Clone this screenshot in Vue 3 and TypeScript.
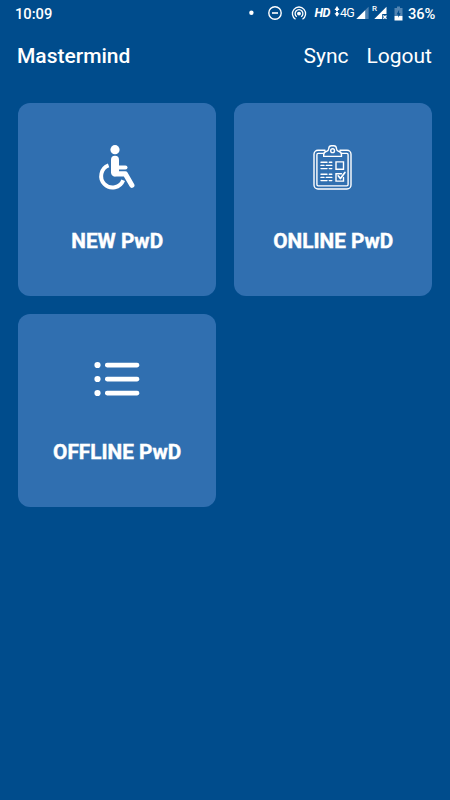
<script setup lang="ts">
interface Tile {
  id: 'new' | 'online' | 'offline'
  label: string
}

const tiles: Tile[] = [
  { id: 'new', label: 'NEW PwD' },
  { id: 'online', label: 'ONLINE PwD' },
  { id: 'offline', label: 'OFFLINE PwD' },
]
</script>

<template>
  <div class="screen">
    <div class="status">
      <span class="clock">10:09</span>
      <div class="indicators">
        <svg class="dot" width="6" height="14" viewBox="0 0 6 14"><circle cx="3.4" cy="6.7" r="2.2" fill="#fff" /></svg>
        <svg class="dnd" width="14" height="14" viewBox="0 0 14 14" fill="none" stroke="#fff">
          <circle cx="7" cy="7" r="6.2" stroke-width="1.4" /><path d="M4 7h6" stroke-width="1.6" />
        </svg>
        <svg class="hotspot" width="16" height="14" viewBox="0 0 16 14" fill="none" stroke="#fff" stroke-width="1.3">
          <path d="M4.5 13.2A6.6 6.6 0 1 1 11.5 13.2" /><path d="M5.8 10.8A3.9 3.9 0 1 1 10.2 10.8" />
          <circle cx="8" cy="7.6" r="1.3" fill="#fff" />
        </svg>
        <span class="hd">HD</span>
        <svg class="arrows" width="6" height="14" viewBox="0 0 6 14" fill="#fff">
          <path d="M3 0 5.5 4H4v1.2H2V4H.5ZM3 10.8 5.5 7.2H4V6H2v1.2H.5Z" />
        </svg>
        <span class="net">4G</span>
        <svg class="signal" width="13" height="14" viewBox="0 0 13 14">
          <path d="M12.6.8V13H.3Z" fill="#4d80af" /><path d="M9.2 4.2V13H.3Z" fill="#fff" />
        </svg>
        <span class="roam">R</span>
        <svg class="signal-off" width="13" height="14" viewBox="0 0 13 14">
          <path d="M12.5.7V8H8.2v5H.3Z" fill="#fff" /><path d="m9.3 9.5 3.2 3.2m0-3.2L9.3 12.7" stroke="#fff" stroke-width="1.3" />
        </svg>
        <svg class="battery" width="9" height="15" viewBox="0 0 9 15">
          <path d="M3 .5h3V2h2.5v8h-8V2H3Z" fill="#5184b2" /><path d="M.5 10h8v4.5h-8Z" fill="#fff" />
          <path d="M5.1 3.8 2.6 8.5h1.7v3.2l2.3-4.5H5.1Z" fill="#004c8c" />
        </svg>
        <span class="percent">36%</span>
      </div>
    </div>

    <header class="bar">
      <h1>Mastermind</h1>
      <nav><a class="sync">Sync</a><a class="logout">Logout</a></nav>
    </header>

    <main class="grid">
      <section v-for="tile in tiles" :key="tile.id" class="tile">
        <svg v-if="tile.id === 'new'" class="icon" width="48" height="48" viewBox="0 0 48 48" fill="none" stroke="#fff" stroke-linecap="round" stroke-linejoin="round">
          <circle cx="22" cy="5.7" r="4.6" fill="#fff" stroke="none" />
          <path d="M22 15.7V28.3" stroke-width="8" />
          <path d="M22 29.9H32.3L38.9 41.3" stroke-width="5.1" />
          <path d="M22.5 23.6H32.5" stroke-width="4" />
          <path d="M15.6 21.4A11.4 11.4 0 1 0 30.2 36.2" stroke-width="3.9" stroke-linecap="butt" />
        </svg>
        <svg v-else-if="tile.id === 'online'" class="icon" width="48" height="48" viewBox="0 0 48 48" fill="none" stroke="#fff" stroke-width="1.4" stroke-linecap="round" stroke-linejoin="round">
          <path d="M16 6.2H9a4 4 0 0 0-4 4V41a4 4 0 0 0 4 4H38a4 4 0 0 0 4-4V10.2a4 4 0 0 0-4-4H31" />
          <path d="M14 9.4H9.2a1.3 1.3 0 0 0-1.3 1.3V40.6a1.3 1.3 0 0 0 1.3 1.3H37.8a1.3 1.3 0 0 0 1.3-1.3V10.7a1.3 1.3 0 0 0-1.3-1.3H33" />
          <path d="M14.7 12.4v-1.7a3.6 3.6 0 0 1 3-3.5q1.8-.4 2-2.4l.1-.8a2.6 2.6 0 0 1 2.6-2.3h2.4A2.6 2.6 0 0 1 27.4 4l.1.8q.2 2 2 2.4a3.6 3.6 0 0 1 3 3.5v1.7Z" />
          <circle cx="23.6" cy="6.7" r="1.9" />
          <path d="M27 17.9h7.5v7.3H27ZM32.5 29.8H27v7.3h7.5v-3.6" stroke-linejoin="miter" />
          <path d="m29.2 31.8 2.2 2.7 4.5-6" stroke-width="1.7" />
          <path d="M12 18.2h6M20.3 18.2h2.5M12 21.4h3M17.3 21.4h5.5M12 24.6h6M20.3 24.6h2.5M12 30.2h6M20.3 30.2h2.5M12 33.4h3M17.3 33.4h5.5M12 36.6h6M20.3 36.6h2.5" stroke-width="1.4" />
        </svg>
        <svg v-else class="icon" width="48" height="48" viewBox="0 0 48 48" fill="#fff">
          <circle cx="4.5" cy="10" r="3.1" /><circle cx="4.5" cy="24" r="3.1" /><circle cx="4.5" cy="38" r="3.1" />
          <rect x="12" y="7.7" width="34.3" height="4.7" rx="2.1" />
          <rect x="12" y="21.7" width="34.3" height="4.7" rx="2.1" />
          <rect x="12" y="35.7" width="34.3" height="4.7" rx="2.1" />
        </svg>
        <h2>{{ tile.label }}</h2>
      </section>
    </main>
  </div>
</template>

<style>
body {
  margin: 0;
  background: #004c8c;
}
</style>

<style scoped>
.screen {
  min-height: 800px;
  background: #004c8c;
  color: #fff;
  font-family: Roboto, sans-serif;
}
.status {
  display: flex;
  justify-content: space-between;
  height: 28px;
  padding: 0 15px;
  line-height: 28px;
  font-size: 14.7px;
  font-weight: 500;
}
.indicators {
  display: flex;
  align-items: center;
  height: 26px;
}
.indicators > * {
  flex: none;
}
.dnd {
  margin-left: 13.5px;
}
.hotspot {
  margin-left: 9px;
}
.hd {
  width: 16px;
  margin-left: 8px;
  font-size: 12.5px;
  font-style: italic;
  font-weight: 700;
  line-height: 26px;
  letter-spacing: -0.6px;
}
.arrows {
  margin-left: 3px;
}
.net {
  width: 15px;
  margin-left: 0.5px;
  font-size: 12.5px;
  font-weight: 400;
  letter-spacing: -0.8px;
}
.signal {
  margin-left: 1px;
}
.roam {
  width: 5px;
  margin-left: 3px;
  align-self: flex-start;
  font-size: 8px;
  line-height: 18px;
}
.signal-off {
  margin-left: -3px;
}
.battery {
  margin-left: 7px;
}
.percent {
  width: 27px;
  margin-left: 5px;
  padding-top: 1px;
  line-height: 28px;
  letter-spacing: -0.1px;
}
.bar {
  display: flex;
  justify-content: space-between;
  align-items: center;
  height: 56px;
  padding: 0 18px 0 17px;
}
h1,
h2 {
  margin: 0;
}
h1 {
  font-size: 21px;
  font-weight: 500;
}
nav {
  display: flex;
  gap: 18px;
  font-size: 21px;
}
.grid {
  display: grid;
  grid-template-columns: 198.4px 198.4px;
  grid-auto-rows: 193.4px;
  gap: 17.6px;
  padding: 19px 18px;
}
.tile {
  display: flex;
  flex-direction: column;
  align-items: center;
  box-sizing: border-box;
  padding-top: 41px;
  border-radius: 12px;
  background: #306fb0;
}
.icon {
  display: block;
}
h2 {
  margin-top: 36px;
  font-size: 20.8px;
  font-weight: 700;
  line-height: 26px;
  white-space: nowrap;
  -webkit-text-stroke: 0.4px #fff;
}
</style>
